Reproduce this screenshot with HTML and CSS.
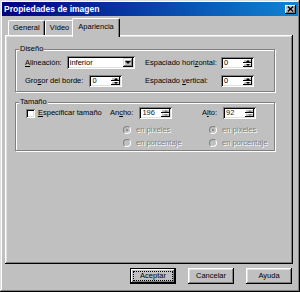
FILE: index.html
```html
<!DOCTYPE html>
<html lang="es">
<head>
<meta charset="utf-8">
<title>Propiedades de imagen</title>
<link rel="stylesheet" href="styles.css">
</head>
<body>
<div class="window">
  <div class="titlebar">
    <span class="title">Propiedades de imagen</span>
    <span class="close"><svg width="7" height="6" viewBox="0 0 7 6"><path d="M0.8 0.5L6.2 5.5M6.2 0.5L0.8 5.5" stroke="#000" stroke-width="1.4"/></svg></span>
  </div>
  <div class="tabs">
    <span class="tab">General</span>
    <span class="tab">Vídeo</span>
    <span class="tab active">Apariencia</span>
  </div>
  <div class="panel">
    <fieldset class="group group-design">
      <legend>Diseño</legend>
      <div class="design-grid">
        <div class="pair"><span><u>A</u>lineación:</span>
          <div class="combo"><span class="field-value">inferior</span><span class="combo-button"></span></div>
        </div>
        <span>Espaciado hori<u>z</u>ontal:</span>
        <div class="spin"><span class="field-value">0</span><span class="spin-buttons"><span class="spin-up"></span><span class="spin-down"></span></span></div>
        <div class="pair pair-wide"><span>Gro<u>s</u>or del borde:</span>
          <div class="spin"><span class="field-value">0</span><span class="spin-buttons"><span class="spin-up"></span><span class="spin-down"></span></span></div>
        </div>
        <span>Espaciado <u>v</u>ertical:</span>
        <div class="spin"><span class="field-value">0</span><span class="spin-buttons"><span class="spin-up"></span><span class="spin-down"></span></span></div>
      </div>
    </fieldset>
    <fieldset class="group group-size">
      <legend>Tamaño</legend>
      <div class="size-row">
        <div class="check-label"><span class="checkbox"></span><span><u>E</u>specificar tamaño</span></div>
        <div class="pair pair-wide"><span>An<u>c</u>ho:</span>
          <div class="spin disabled"><span class="field-value">196</span><span class="spin-buttons"><span class="spin-up"></span><span class="spin-down"></span></span></div>
        </div>
        <div class="pair pair-wide"><span>A<u>l</u>to:</span>
          <div class="spin disabled"><span class="field-value">92</span><span class="spin-buttons"><span class="spin-up"></span><span class="spin-down"></span></span></div>
        </div>
      </div>
      <div class="units-row">
        <div class="units units-width">
          <div class="radio-row"><span class="radio checked"></span><span class="disabled-text">en píxeles</span></div>
          <div class="radio-row"><span class="radio"></span><span class="disabled-text">en porcentaje</span></div>
        </div>
        <div class="units">
          <div class="radio-row"><span class="radio checked"></span><span class="disabled-text">en píxeles</span></div>
          <div class="radio-row"><span class="radio"></span><span class="disabled-text">en porcentaje</span></div>
        </div>
      </div>
    </fieldset>
  </div>
  <div class="actions">
    <button class="btn btn-default"><span class="focus">Aceptar</span></button>
    <button class="btn">Cancelar</button>
    <button class="btn">Ayuda</button>
  </div>
</div>
</body>
</html>
```
FILE: styles.css
```css
html, body {
  margin: 0;
  padding: 0;
  background: #c0c0c0;
}

body {
  font-family: "Liberation Sans", Arial, sans-serif;
  font-size: 7.5px;
  line-height: 10px;
  color: #000;
}

.window {
  width: 300px;
  height: 292px;
  box-sizing: border-box;
  padding: 2px;
  display: flex;
  flex-direction: column;
  background: #c0c0c0;
  box-shadow: inset -1px -1px #000, inset 1px 1px #dfdfdf, inset -2px -2px #808080, inset 2px 2px #fff;
}

.titlebar {
  height: 14px;
  display: flex;
  align-items: center;
  justify-content: space-between;
  padding: 0 2px 0 2px;
  background: linear-gradient(90deg, #000080, #1084d0);
}

.title {
  color: #fff;
  font-weight: bold;
  font-size: 8.5px;
}

.close {
  width: 11px;
  height: 9px;
  box-sizing: border-box;
  display: flex;
  align-items: center;
  justify-content: center;
  background: #c0c0c0;
  box-shadow: inset -1px -1px #000, inset 1px 1px #fff, inset -2px -2px #808080;
}

.close svg {
  display: block;
}

.tabs {
  display: flex;
  align-items: flex-end;
  height: 17px;
  margin-top: 2px;
  padding-left: 6px;
}

.tab {
  height: 15px;
  box-sizing: border-box;
  display: flex;
  align-items: center;
  padding: 0 4px;
  background: #c0c0c0;
  border-top: 1px solid #fff;
  border-left: 1px solid #fff;
  border-right: 1px solid #000;
  border-radius: 2px 2px 0 0;
  box-shadow: inset -1px 0 #808080;
}

.tab.active {
  height: 19px;
  margin: 0 -2px -2px -2px;
  padding: 0 5px 2px 5px;
  position: relative;
  z-index: 1;
}

.panel {
  flex: 1;
  margin: 0 5px 0 3px;
  padding: 9px 0 0 10px;
  box-shadow: inset -1px -1px #000, inset 1px 1px #fff, inset -2px -2px #808080, inset 2px 2px #dfdfdf;
}

.group {
  width: 260px;
  box-sizing: border-box;
  margin: 0;
  min-inline-size: 0;
  border: 1px solid #808080;
  padding: 2px 0 4px 9px;
  box-shadow: inset 1px 1px #fff, 1px 1px #fff;
}

.group legend {
  padding: 0 1px;
  margin-left: -6px;
  background: #c0c0c0;
  line-height: 10px;
}

.group-size {
  margin-top: 5px;
  padding-top: 0;
  padding-bottom: 1px;
}

.design-grid {
  display: grid;
  grid-template-columns: 120px 76px 33px;
  grid-auto-rows: 13px;
  row-gap: 5px;
  align-items: center;
}

.pair {
  display: flex;
  align-items: center;
  gap: 5px;
}

.pair-wide {
  gap: 6px;
}

.field-value {
  flex: 1;
  padding-left: 1px;
  line-height: 8px;
  white-space: nowrap;
  overflow: hidden;
}

.combo {
  width: 68px;
  height: 13px;
  box-sizing: border-box;
  padding: 2px;
  display: flex;
  align-items: center;
  background: #fff;
  box-shadow: inset 1px 1px #808080, inset -1px -1px #fff, inset 2px 2px #000, inset -2px -2px #dfdfdf;
}

.combo-button {
  width: 10px;
  height: 9px;
  box-sizing: border-box;
  display: flex;
  align-items: center;
  justify-content: center;
  background: #c0c0c0;
  box-shadow: inset -1px -1px #000, inset 1px 1px #dfdfdf, inset -2px -2px #808080, inset 2px 2px #fff;
}

.combo-button::after {
  content: "";
  border-left: 3px solid transparent;
  border-right: 3px solid transparent;
  border-top: 3px solid #000;
}

.spin {
  width: 33px;
  height: 12px;
  box-sizing: border-box;
  padding: 2px;
  display: flex;
  align-items: center;
  background: #fff;
  box-shadow: inset 1px 1px #808080, inset -1px -1px #fff, inset 2px 2px #000, inset -2px -2px #dfdfdf;
}

.spin-buttons {
  width: 9px;
  height: 8px;
  display: flex;
  flex-direction: column;
}

.spin-up,
.spin-down {
  flex: 1;
  display: flex;
  align-items: center;
  justify-content: center;
  background: #c0c0c0;
  box-shadow: inset -1px -1px #000, inset 1px 1px #fff;
}

.spin-up::after {
  content: "";
  border-left: 2px solid transparent;
  border-right: 2px solid transparent;
  border-bottom: 2px solid #000;
}

.spin-down::after {
  content: "";
  border-left: 2px solid transparent;
  border-right: 2px solid transparent;
  border-top: 2px solid #000;
}

.spin.disabled .field-value {
  color: #202020;
}

.spin.disabled .spin-up::after {
  border-bottom-color: #808080;
}

.spin.disabled .spin-down::after {
  border-top-color: #808080;
}

.size-row {
  display: grid;
  grid-template-columns: 85px 92px auto;
  height: 12px;
  align-items: center;
}

.check-label {
  display: flex;
  align-items: center;
  gap: 3px;
  padding-left: 1px;
}

.checkbox {
  width: 9px;
  height: 9px;
  box-sizing: border-box;
  background: #fff;
  box-shadow: inset 1px 1px #808080, inset -1px -1px #fff, inset 2px 2px #000, inset -2px -2px #dfdfdf;
}

.units-row {
  display: flex;
  margin-top: 4px;
  padding-left: 98px;
}

.units-width {
  width: 86px;
}

.radio-row {
  height: 13px;
  display: flex;
  align-items: center;
  gap: 5px;
}

.radio {
  width: 8px;
  height: 8px;
  box-sizing: border-box;
  border-radius: 50%;
  border: 1px solid;
  border-color: #808080 #fff #fff #808080;
  background: #c0c0c0;
  display: flex;
  align-items: center;
  justify-content: center;
}

.radio.checked::after {
  content: "";
  width: 2px;
  height: 2px;
  border-radius: 50%;
  background: #808080;
}

.disabled-text {
  color: #808080;
  text-shadow: 1px 1px 0 #fff;
}

.actions {
  display: flex;
  justify-content: flex-end;
  gap: 12px;
  margin: 4px 6px 6px 0;
}

.btn {
  width: 46px;
  height: 16px;
  padding: 0;
  border: 0;
  font-family: inherit;
  font-size: 7.5px;
  line-height: 10px;
  color: #000;
  background: #c0c0c0;
  display: flex;
  align-items: center;
  justify-content: center;
  box-shadow: inset -1px -1px #000, inset 1px 1px #fff, inset -2px -2px #808080, inset 2px 2px #dfdfdf;
}

.btn-default {
  box-shadow: inset 0 0 0 1px #000, inset -2px -2px #000, inset 2px 2px #fff, inset -3px -3px #808080;
}

.focus {
  flex: 1;
  align-self: stretch;
  margin: 3px;
  border: 1px dotted #000;
  display: flex;
  align-items: center;
  justify-content: center;
}
```
